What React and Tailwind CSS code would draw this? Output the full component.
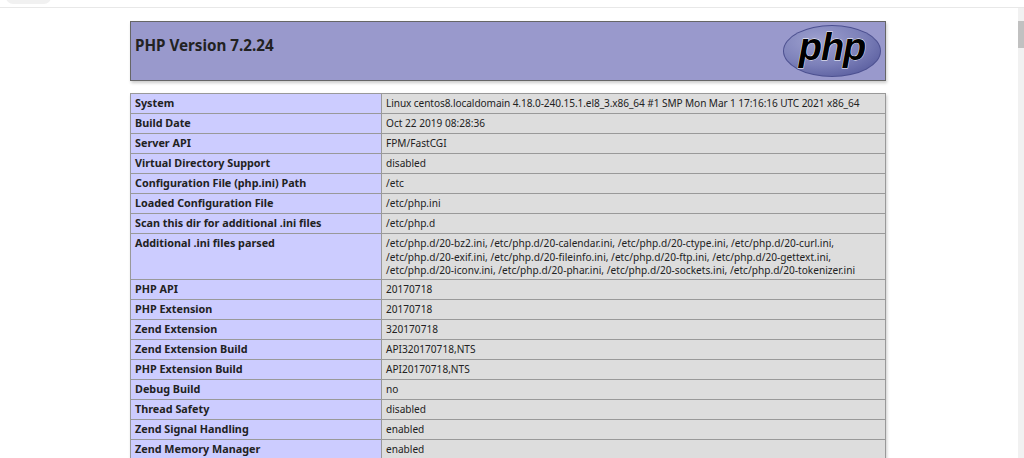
const rows = [
  ['System', 'Linux centos8.localdomain 4.18.0-240.15.1.el8_3.x86_64 #1 SMP Mon Mar 1 17:16:16 UTC 2021 x86_64', 'tracking-[-0.085px]'],
  ['Build Date', 'Oct 22 2019 08:28:36'],
  ['Server API', 'FPM/FastCGI'],
  ['Virtual Directory Support', 'disabled'],
  ['Configuration File (php.ini) Path', '/etc'],
  ['Loaded Configuration File', '/etc/php.ini'],
  ['Scan this dir for additional .ini files', '/etc/php.d'],
  ['Additional .ini files parsed', '/etc/php.d/20-bz2.ini, /etc/php.d/20-calendar.ini, /etc/php.d/20-ctype.ini, /etc/php.d/20-curl.ini, /etc/php.d/20-exif.ini, /etc/php.d/20-fileinfo.ini, /etc/php.d/20-ftp.ini, /etc/php.d/20-gettext.ini, /etc/php.d/20-iconv.ini, /etc/php.d/20-phar.ini, /etc/php.d/20-sockets.ini, /etc/php.d/20-tokenizer.ini', 'tracking-[0.02px]'],
  ['PHP API', '20170718'],
  ['PHP Extension', '20170718'],
  ['Zend Extension', '320170718'],
  ['Zend Extension Build', 'API320170718,NTS'],
  ['PHP Extension Build', 'API20170718,NTS'],
  ['Debug Build', 'no'],
  ['Thread Safety', 'disabled'],
  ['Zend Signal Handling', 'enabled'],
  ['Zend Memory Manager', 'enabled'],
];

const PhpLogo = () => (
  <svg width="100" height="54" viewBox="0 0 100 54">
    <defs>
      <radialGradient id="logoFill" cx="35%" cy="30%" r="80%">
        <stop offset="0%" stopColor="#9ea1cf" />
        <stop offset="60%" stopColor="#7c80b9" />
        <stop offset="100%" stopColor="#5a5e9f" />
      </radialGradient>
    </defs>
    <ellipse cx="50" cy="27" rx="49" ry="26" fill="#4c5090" />
    <ellipse cx="50" cy="27" rx="48" ry="25" fill="url(#logoFill)" />
    <text
      x="50"
      y="36"
      textAnchor="middle"
      fontFamily="Liberation Sans, sans-serif"
      fontStyle="italic"
      fontWeight="700"
      fontSize="38"
      fill="#000"
      stroke="#fff"
      strokeWidth="0.8"
      paintOrder="stroke"
      letterSpacing="-1"
    >
      php
    </text>
  </svg>
);

export default function App() {
  return (
    <div className="h-[458px] overflow-hidden bg-white font-['Noto_Sans',sans-serif] text-[#222]">
      <div className="relative h-[8px] border-b border-[#e8e8e8]">
        <div className="absolute left-[6px] top-[-10px] h-[14px] w-[45px] rounded-[8px] bg-[#f1f1f1]" />
      </div>
      <div className="flex">
        <div className="flex-1 pl-[130px] pt-[13px]">
          <div className="w-[756px]">
            <div className="flex h-[60px] justify-between border border-[#666] bg-[#9999cc] pl-[4px] pr-[3px] shadow-[1px_2px_3px_#ccc]">
              <h1 className="mt-[13px] text-[15.2px] font-bold leading-[20px] text-[#222]">PHP Version 7.2.24</h1>
              <div className="mt-[2px]">
                <PhpLogo />
              </div>
            </div>
            <table className="mt-[12px] w-full table-fixed border-collapse shadow-[1px_2px_3px_#ccc]">
              <tbody>
                {rows.map(([label, value, spacing]) => (
                  <tr key={label} className="h-[20px] align-top leading-[13.5px]">
                    <td className="w-[251px] border border-[#999] bg-[#ccccff] px-[4px] pb-[2px] pt-[2px] text-[10.8px] font-bold">{label}</td>
                    <td className={`border border-[#999] bg-[#dddddd] px-[4px] pb-[1px] pt-[3px] text-[10.1px] ${spacing || ''}`}>{value}</td>
                  </tr>
                ))}
              </tbody>
            </table>
          </div>
        </div>
        <div className="relative w-[6px] shrink-0 bg-[#f1f1f1]">
          <div className="absolute left-0 top-[13px] h-[27px] w-full bg-[#c1c1c1]" />
        </div>
      </div>
    </div>
  );
}
